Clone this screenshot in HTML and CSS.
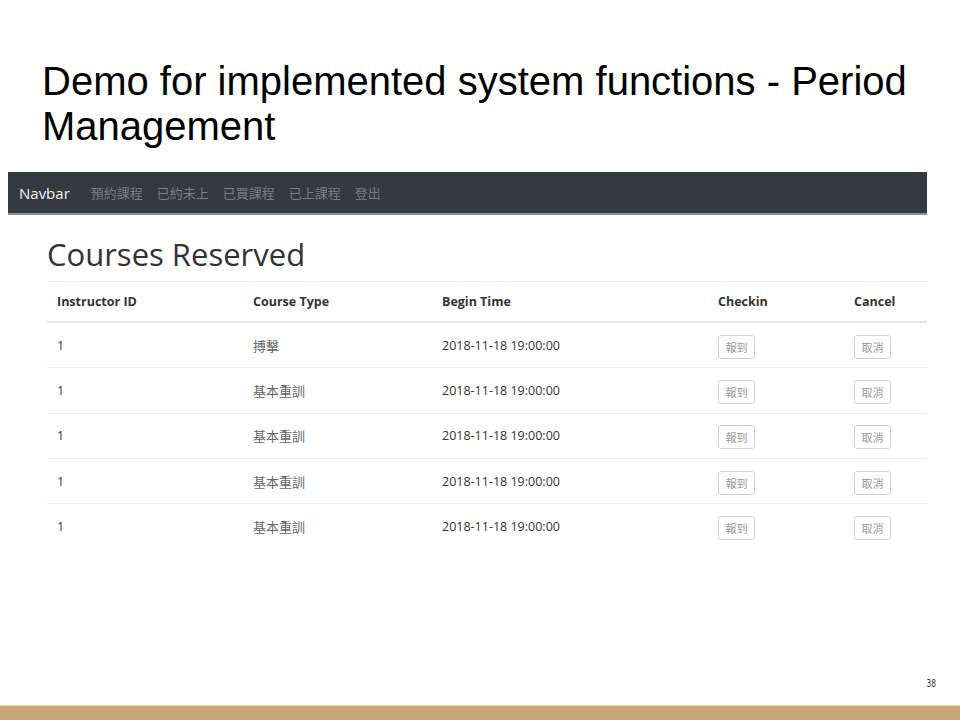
FILE: index.html
```html
<!DOCTYPE html>
<html>
<head>
<meta charset="utf-8">
<link rel="stylesheet" href="styles.css">
</head>
<body>
<div class="slide">
  <h1 class="title">Demo for implemented system functions - Period Management</h1>
  <nav class="navbar">
    <span class="brand">Navbar</span>
    <span class="nav-link">預約課程</span>
    <span class="nav-link">已約未上</span>
    <span class="nav-link">已買課程</span>
    <span class="nav-link">已上課程</span>
    <span class="nav-link">登出</span>
  </nav>
  <section class="content">
    <h2 class="heading">Courses Reserved</h2>
    <table class="table">
      <thead>
        <tr>
          <th class="c1">Instructor ID</th>
          <th class="c2">Course Type</th>
          <th class="c3">Begin Time</th>
          <th class="c4">Checkin</th>
          <th class="c5">Cancel</th>
        </tr>
      </thead>
      <tbody>
        <tr><td>1</td><td class="cjk">搏擊</td><td>2018-11-18 19:00:00</td><td><span class="btn">報到</span></td><td><span class="btn">取消</span></td></tr>
        <tr><td>1</td><td class="cjk">基本重訓</td><td>2018-11-18 19:00:00</td><td><span class="btn">報到</span></td><td><span class="btn">取消</span></td></tr>
        <tr><td>1</td><td class="cjk">基本重訓</td><td>2018-11-18 19:00:00</td><td><span class="btn">報到</span></td><td><span class="btn">取消</span></td></tr>
        <tr><td>1</td><td class="cjk">基本重訓</td><td>2018-11-18 19:00:00</td><td><span class="btn">報到</span></td><td><span class="btn">取消</span></td></tr>
        <tr><td>1</td><td class="cjk">基本重訓</td><td>2018-11-18 19:00:00</td><td><span class="btn">報到</span></td><td><span class="btn">取消</span></td></tr>
      </tbody>
    </table>
  </section>
  <div class="spacer"></div>
  <div class="page-num">38</div>
  <div class="footer-bar"></div>
</div>
</body>
</html>
```
FILE: styles.css
```css
html, body {
  margin: 0;
  padding: 0;
  background: #ffffff;
}
.slide {
  width: 960px;
  height: 720px;
  display: flex;
  flex-direction: column;
  overflow: hidden;
}
.title {
  margin: 59px 40px 0 42px;
  font-family: "Liberation Sans", Arial, sans-serif;
  font-weight: normal;
  font-size: 40px;
  line-height: 45px;
  color: #000000;
}
.navbar {
  margin: 23px 33px 0 8px;
  height: 41px;
  border-bottom: 2px solid #8c8f92;
  background: #343a40;
  display: flex;
  align-items: center;
  padding-left: 11px;
  font-family: "Open Sans", "Noto Sans CJK TC", sans-serif;
}
.brand {
  color: #f2f2f2;
  font-size: 15px;
  margin-right: 14px;
}
.nav-link {
  color: #787d82;
  font-family: "Noto Sans CJK TC", sans-serif;
  font-size: 13px;
  padding: 0 7px;
}
.content {
  margin: 0 33px 0 47px;
  font-family: "Open Sans", "Noto Sans CJK TC", sans-serif;
  color: #333333;
}
.heading {
  margin: 21px 0 8px 0;
  font-size: 31px;
  font-weight: normal;
  line-height: 37px;
  color: #333333;
}
.table {
  width: 880px;
  border-collapse: collapse;
  font-size: 12.5px;
  border-top: 1px solid #eef0f2;
}
.table th {
  text-align: left;
  font-weight: bold;
  font-size: 12.5px;
  height: 39px;
  padding: 0 10px;
  border-bottom: 2px solid #e3e6e9;
  color: #333;
}
.c1 { width: 176px; }
.c2 { width: 169px; }
.c3 { width: 256px; }
.c4 { width: 116px; }
.c5 { width: 63px; }
.table td {
  height: 44.3px;
  padding: 0 10px;
  border-top: 1px solid #eceef0;
  vertical-align: middle;
}
.table tbody tr:first-child td {
  border-top: none;
}
.table td.cjk {
  font-family: "Noto Sans CJK TC", sans-serif;
  font-size: 13px;
  color: #666666;
}
.btn {
  display: inline-block;
  width: 35px;
  height: 22px;
  line-height: 22px;
  text-align: center;
  border: 1px solid #cfd2d5;
  border-radius: 3px;
  font-family: "Noto Sans CJK TC", sans-serif;
  font-size: 11px;
  color: #999999;
  margin-top: 3px;
}
.spacer {
  flex: 1;
}
.page-num {
  align-self: flex-end;
  margin: 0 22px 16px 0;
  font-family: "DejaVu Sans", sans-serif;
  font-size: 10px;
  color: #333;
  transform: scaleX(0.75);
}
.footer-bar {
  height: 14px;
  background: #c9a677;
  border-top: 1px solid #e4d3b8;
}
```
